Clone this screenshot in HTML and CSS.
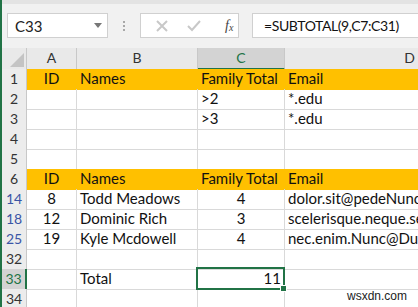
FILE: index.html
```html
<!DOCTYPE html>
<html lang="en">
<head>
    <meta charset="UTF-8">
    <title>Sheet</title>
    <link rel="stylesheet" href="styles.css">
</head>
<body>
    <div class="app">
        <!-- barra de formula -->
        <div class="toolbar">
            <div class="namebox">
                <span>C33</span>
                <svg width="8" height="5" viewBox="0 0 8 5"><path d="M0 0h8L4 5z" fill="#777"/></svg>
            </div>
            <div class="dots"><i></i><i></i><i></i></div>
            <div class="fxbox">
                <svg class="ic" width="12" height="12" viewBox="0 0 12 12"><path d="M1 1l10 10M11 1L1 11" stroke="#c8c8c8" stroke-width="2"/></svg>
                <svg class="ic" width="14" height="12" viewBox="0 0 14 12"><path d="M1 6l4 4 8-9" stroke="#c8c8c8" stroke-width="2" fill="none"/></svg>
                <span class="fx">f<sub>x</sub></span>
            </div>
            <div class="formula">=SUBTOTAL(9,C7:C31)</div>
        </div>

        <div class="grid">
            <div class="row head">
                <div class="corner"><svg width="14" height="14" viewBox="0 0 14 14"><path d="M14 0v14H0z" fill="#c4c4c4"/></svg></div>
                <div class="ch">A</div>
                <div class="ch">B</div>
                <div class="ch sel">C</div>
                <div class="ch">D</div>
            </div>

            <div class="row yellow">
                <div class="rh">1</div>
                <div class="c center">ID</div>
                <div class="c">Names</div>
                <div class="c">Family Total</div>
                <div class="c">Email</div>
            </div>
            <div class="row">
                <div class="rh">2</div>
                <div class="c"></div>
                <div class="c"></div>
                <div class="c">&gt;2</div>
                <div class="c">*.edu</div>
            </div>
            <div class="row">
                <div class="rh">3</div>
                <div class="c"></div>
                <div class="c"></div>
                <div class="c">&gt;3</div>
                <div class="c">*.edu</div>
            </div>
            <div class="row">
                <div class="rh">4</div>
                <div class="c"></div><div class="c"></div><div class="c"></div><div class="c"></div>
            </div>
            <div class="row">
                <div class="rh">5</div>
                <div class="c"></div><div class="c"></div><div class="c"></div><div class="c"></div>
            </div>
            <div class="row yellow">
                <div class="rh">6</div>
                <div class="c center">ID</div>
                <div class="c">Names</div>
                <div class="c">Family Total</div>
                <div class="c">Email</div>
            </div>
            <div class="row">
                <div class="rh blue">14</div>
                <div class="c center">8</div>
                <div class="c">Todd Meadows</div>
                <div class="c center">4</div>
                <div class="c">dolor.sit@pedeNunc.co.uk</div>
            </div>
            <div class="row">
                <div class="rh blue">18</div>
                <div class="c center">12</div>
                <div class="c">Dominic Rich</div>
                <div class="c center">3</div>
                <div class="c">scelerisque.neque.sed@ac.org</div>
            </div>
            <div class="row">
                <div class="rh blue">25</div>
                <div class="c center">19</div>
                <div class="c">Kyle Mcdowell</div>
                <div class="c center">4</div>
                <div class="c">nec.enim.Nunc@Duis.edu</div>
            </div>
            <div class="row">
                <div class="rh">32</div>
                <div class="c"></div><div class="c"></div><div class="c"></div><div class="c"></div>
            </div>
            <div class="row">
                <div class="rh active">33</div>
                <div class="c"></div>
                <div class="c">Total</div>
                <div class="c right cur">11</div>
                <div class="c"></div>
            </div>
            <div class="row">
                <div class="rh">34</div>
                <div class="c"></div><div class="c"></div><div class="c"></div><div class="c"></div>
            </div>
        </div>

        <div class="mark">wsxdn.com</div>
    </div>
</body>
</html>
```

FILE: styles.css
```css
body {
    margin: 0;
    padding: 0;
    background: #fff;
    font-family: Lato, "Liberation Sans", sans-serif;
}

.app {
    position: relative;
    width: 418px;
    height: 307px;
    overflow: hidden;
    border-left: 2px solid #217346;
    box-sizing: border-box;
}

.toolbar {
    height: 48px;
    background: #f1f1f1;
    border-top: 4px solid #e3e3e3;
    box-sizing: border-box;
    display: flex;
    align-items: flex-start;
    padding-top: 9px;
}

.namebox {
    margin-left: 5px;
    width: 101px;
    height: 25px;
    background: #fff;
    border: 1px solid #d0d0d0;
    box-sizing: border-box;
    display: flex;
    align-items: center;
    justify-content: space-between;
    padding: 0 5px 0 7px;
    font-size: 15px;
    color: #222;
}

.dots {
    width: 32px;
    height: 25px;
    display: flex;
    flex-direction: column;
    align-items: center;
    justify-content: center;
    gap: 2px;
}

.dots i {
    width: 2px;
    height: 2px;
    background: #a8a8a8;
}

.fxbox {
    width: 99px;
    height: 25px;
    background: #fff;
    border: 1px solid #d0d0d0;
    box-sizing: border-box;
    display: flex;
    align-items: center;
    padding-left: 15px;
}

.fxbox .ic:nth-child(2) {
    margin-left: 19px;
}

.fx {
    margin-left: 24px;
    font-family: "Liberation Serif", serif;
    font-style: italic;
    font-size: 14px;
    color: #444;
}

.fx sub {
    font-size: 10px;
    vertical-align: -1px;
}

.formula {
    margin-left: 13px;
    flex: 1;
    height: 25px;
    background: #fff;
    border: 1px solid #d0d0d0;
    border-right: none;
    box-sizing: border-box;
    padding-left: 11px;
    font-size: 14px;
    letter-spacing: -0.4px;
    line-height: 23px;
    color: #111;
}

.row {
    display: grid;
    grid-template-columns: 25px 50px 121px 87px 250px;
    height: 20px;
    font-size: 15px;
    color: #111;
}

.row.head {
    height: 21px;
    background: #e9e9e9;
}

.corner {
    border-right: 1px solid #c8c8c8;
    border-bottom: 1px solid #c8c8c8;
    display: flex;
    align-items: flex-end;
    justify-content: flex-end;
    padding: 0 2px 2px 0;
}

.ch {
    border-right: 1px solid #c8c8c8;
    border-bottom: 1px solid #c8c8c8;
    text-align: center;
    line-height: 20px;
    color: #333;
    font-size: 14px;
}

.ch.sel {
    background: #d3d3d3;
    border-bottom: 2px solid #217346;
    color: #217346;
}

.rh {
    background: #ececec;
    border-right: 1px solid #c8c8c8;
    border-bottom: 1px solid #d4d4d4;
    text-align: center;
    line-height: 20px;
    color: #333;
    font-size: 14px;
}

.rh.blue {
    color: #3a55a6;
}

.rh.active {
    background: #d3d3d3;
    border-right: 2px solid #217346;
    color: #217346;
}

.c {
    border-right: 1px solid #d9d9d9;
    border-bottom: 1px solid #d9d9d9;
    line-height: 19px;
    padding: 0 3px;
    white-space: nowrap;
    overflow: hidden;
    box-sizing: border-box;
}

.c:last-child {
    border-right: none;
}

.c.center {
    text-align: center;
}

.c.right {
    text-align: right;
}

.row.yellow .c {
    background: #ffc000;
    border-color: #ffc000;
}

.cur {
    position: relative;
    overflow: visible;
}

.cur::before {
    content: "";
    position: absolute;
    left: -2px;
    top: -2px;
    right: -1px;
    bottom: -1px;
    border: 2px solid #217346;
}

.cur::after {
    content: "";
    position: absolute;
    right: -3px;
    bottom: -3px;
    width: 5px;
    height: 5px;
    background: #217346;
    border: 1px solid #fff;
}

.mark {
    position: absolute;
    left: 345px;
    top: 289px;
    font-family: "Liberation Sans", sans-serif;
    font-size: 12px;
    color: #222;
}
```
